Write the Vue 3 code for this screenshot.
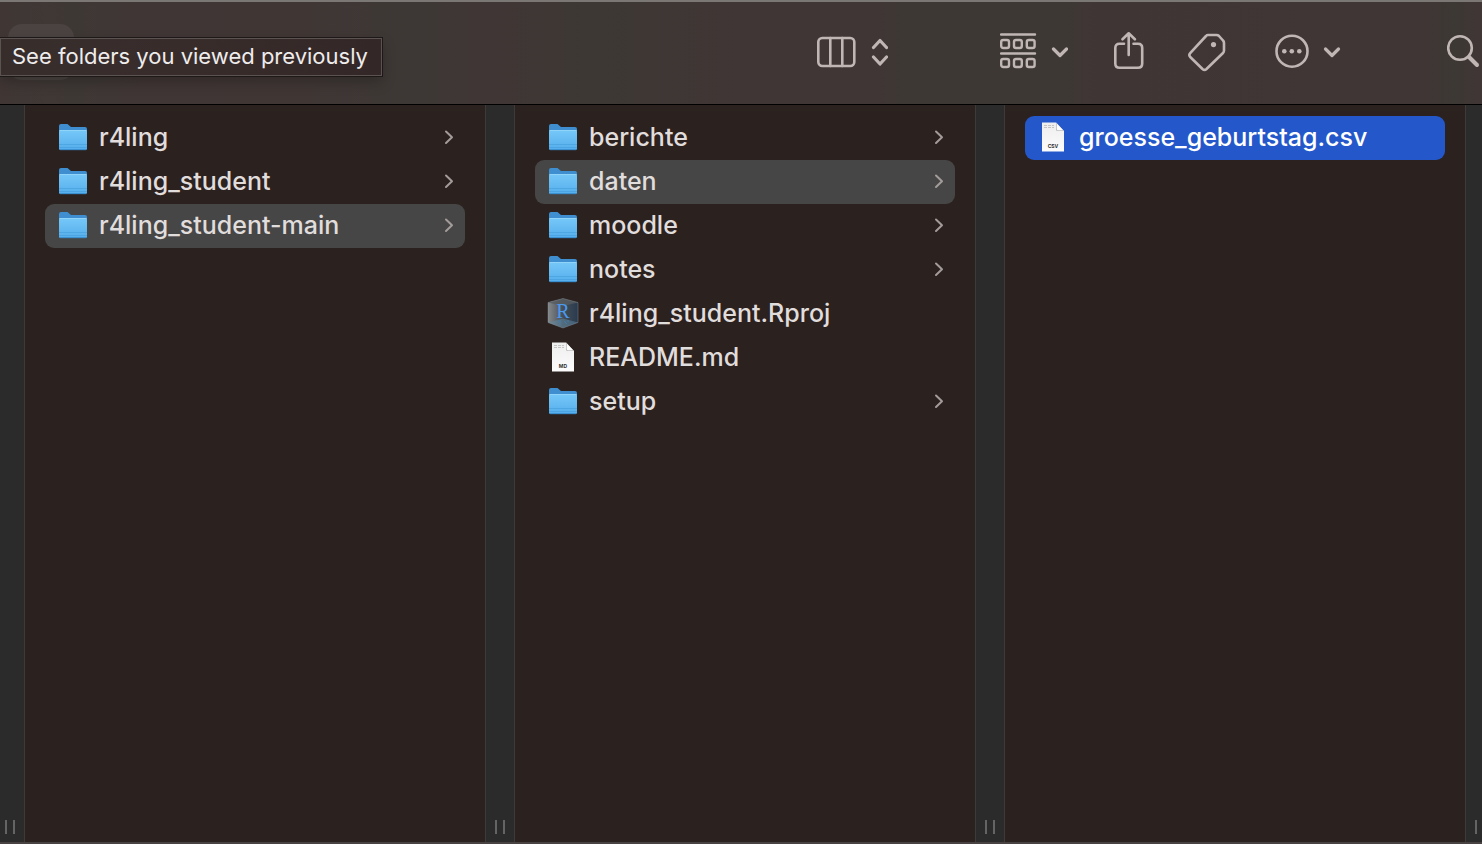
<script setup>
import { ref } from 'vue'

const columns = ref([
  {
    id: 'root',
    items: [
      { name: 'r4ling', kind: 'folder' },
      { name: 'r4ling_student', kind: 'folder' },
      { name: 'r4ling_student-main', kind: 'folder', state: 'open' },
    ],
  },
  {
    id: 'project',
    items: [
      { name: 'berichte', kind: 'folder' },
      { name: 'daten', kind: 'folder', state: 'open' },
      { name: 'moodle', kind: 'folder' },
      { name: 'notes', kind: 'folder' },
      { name: 'r4ling_student.Rproj', kind: 'rproj' },
      { name: 'README.md', kind: 'doc', label: 'MD' },
      { name: 'setup', kind: 'folder' },
    ],
  },
  {
    id: 'data',
    items: [{ name: 'groesse_geburtstag.csv', kind: 'doc', label: 'CSV', state: 'selected' }],
  },
])
</script>

<template>
  <div class="finder">
    <svg class="defs" aria-hidden="true">
      <defs>
        <linearGradient id="folderFront" x1="0" y1="0" x2="0" y2="1">
          <stop offset="0" stop-color="#76c8f8" />
          <stop offset="1" stop-color="#55aeec" />
        </linearGradient>
        <linearGradient id="paper" x1="0" y1="0" x2="0" y2="1">
          <stop offset="0" stop-color="#eeeeee" />
          <stop offset="1" stop-color="#fcfcfc" />
        </linearGradient>
        <linearGradient id="cube" x1="0" y1="0" x2="1" y2="0">
          <stop offset="0" stop-color="#85898c" />
          <stop offset="0.5" stop-color="#454c54" />
          <stop offset="1" stop-color="#293b50" />
        </linearGradient>
      </defs>
    </svg>

    <header class="toolbar">
      <nav class="history">
        <button class="nav hovered" type="button" aria-label="Back">
          <svg width="14" height="32" viewBox="0 0 14 32"><path d="M11 2 L3 16 L11 27" /></svg>
        </button>
        <button class="nav" type="button" aria-label="Forward" disabled>
          <svg width="14" height="32" viewBox="0 0 14 32"><path d="M3 5 L11 16 L3 27" /></svg>
        </button>
        <div class="tooltip" role="tooltip">See folders you viewed previously</div>
      </nav>

      <div class="actions">
        <button class="tool view" type="button" aria-label="Column view">
          <svg width="72" height="40" viewBox="0 0 72 40">
            <rect x="2.300" y="6" width="36" height="28" rx="4" />
            <path d="M14.300 6V34M26.300 6V34" />
            <path class="bold" d="M57.500 15.500 L64 8.500 L70.500 15.500 M57.500 25 L64 32 L70.500 25" />
          </svg>
        </button>
        <button class="tool group" type="button" aria-label="Group items">
          <svg width="68" height="40" viewBox="0 0 68 40">
            <path class="bar" d="M1 2.500H35M1 21.500H35" />
            <g class="cells">
              <rect x="1.200" y="8" width="7.800" height="8" rx="2" />
              <rect x="14" y="8" width="7.800" height="8" rx="2" />
              <rect x="26.800" y="8" width="7.800" height="8" rx="2" />
              <rect x="1.200" y="27" width="7.800" height="8" rx="2" />
              <rect x="14" y="27" width="7.800" height="8" rx="2" />
              <rect x="26.800" y="27" width="7.800" height="8" rx="2" />
            </g>
            <path class="bold" d="M53.500 17 L60 23.500 L66.500 17" />
          </svg>
        </button>
        <button class="tool share" type="button" aria-label="Share">
          <svg width="30" height="40" viewBox="0 0 30 40">
            <path d="M10 11.800H5.500Q1.300 11.800 1.300 16V31.500Q1.300 35.700 5.500 35.700H24Q28.200 35.700 28.200 31.500V16Q28.200 11.800 24 11.800H19.500M14.700 23V1.500M8.500 7.300L14.700 1.300L20.900 7.300" />
          </svg>
        </button>
        <button class="tool tag" type="button" aria-label="Edit tags">
          <svg width="38" height="40" viewBox="0 0 38 40">
            <path d="M20 3H28.500Q30 3 31 4L35 8.500Q36 9.500 36 11V18.500Q36 20 35 21L18.500 37Q16.500 38.800 14.500 37L2.200 25Q.5 23 2.200 21.200L18 4Q18.800 3 20 3Z" />
            <circle class="dot" cx="25.500" cy="12.600" r="2.600" />
          </svg>
        </button>
        <button class="tool more" type="button" aria-label="More actions">
          <svg width="66" height="40" viewBox="0 0 66 40">
            <circle cx="17" cy="19.200" r="15.500" />
            <circle class="dot" cx="9.300" cy="19.200" r="2.300" />
            <circle class="dot" cx="16.800" cy="19.200" r="2.300" />
            <circle class="dot" cx="24.300" cy="19.200" r="2.300" />
            <path class="bold" d="M50.500 17 L57 23.500 L63.500 17" />
          </svg>
        </button>
        <button class="tool search" type="button" aria-label="Search">
          <svg width="34" height="40" viewBox="0 0 34 40">
            <circle cx="13" cy="16" r="11.800" />
            <path class="handle" d="M22 25L30 33" />
          </svg>
        </button>
      </div>
    </header>

    <main class="browser">
      <div class="gutter first"><i></i><i></i></div>
      <template v-for="(column, index) in columns" :key="column.id">
        <ul class="column">
          <li v-for="item in column.items" :key="item.name">
            <button class="row" :class="item.state" type="button">
              <svg v-if="item.kind === 'folder'" class="icon" width="32" height="32" viewBox="0 0 32 32">
                <path fill="#3f8fd0" d="M2 5Q2 3 4 3H10.500L14 6H28Q30 6 30 8V27H2Z" />
                <rect x="2" y="9" width="28" height="20" rx="1.500" fill="url(#folderFront)" />
                <path d="M2.500 9.500H29.500" stroke="#91d4f9" />
                <path d="M2 23.500H30M2 26.500H30" stroke="#459edb" opacity=".6" />
                <path d="M3 28.700H29" stroke="#368bc9" />
              </svg>
              <svg v-else-if="item.kind === 'rproj'" class="icon" width="32" height="32" viewBox="0 0 32 32">
                <path fill="url(#cube)" d="M16 1.500L31 5.500V25.500L16 31L1 25.500V5.500Z" />
                <path fill="#565b5f" opacity=".8" d="M1 5.500L16 1.500L31 5.500L16 9Z" />
                <path fill="#5f89a3" opacity=".5" d="M1 25.500L16 21.500L31 25.500L16 31Z" />
                <path d="M1 5.500L16 1.500L31 5.500V25.500L16 31L1 25.500Z" fill="none" stroke="#8d979f" opacity=".4" />
                <path d="M11 24H14M13 24V28M17 24L20 27M20 24H22" stroke="#3f83b8" opacity=".7" />
                <text x="16" y="21" class="r-letter">R</text>
              </svg>
              <svg v-else class="icon" width="32" height="32" viewBox="0 0 32 32">
                <path fill="url(#paper)" d="M5 1.500H19L27 10V30.500H5Z" />
                <path fill="#bdbdbd" d="M19 1.500V8.500Q19 10 20.500 10H27Z" />
                <path fill="#ffffff" d="M19.800 2.500V8Q19.800 9.200 21 9.200H26Z" />
                <path d="M7 4.500H17M7 6.500H17" stroke="#c4c4c4" stroke-dasharray="3 1" />
                <text x="16" y="27" class="doc-label">{{ item.label }}</text>
              </svg>
              <span class="name">{{ item.name }}</span>
              <svg v-if="item.kind === 'folder'" class="arrow" width="10" height="16" viewBox="0 0 10 16">
                <path d="M2 2.500L8 8.200L2 14" />
              </svg>
            </button>
          </li>
        </ul>
        <div class="gutter" :class="{ last: index === columns.length - 1 }"><i></i><i></i></div>
      </template>
    </main>
  </div>
</template>

<style>
body {
  margin: 0;
  background: #2b211f;
}
</style>

<style scoped>
.finder {
  box-sizing: border-box;
  display: flex;
  flex-direction: column;
  height: 100vh;
  overflow: hidden;
  border-top: 2px solid #7b7775;
  background: #2b211f;
  color: #e0dddc;
  font-family: Inter, "Liberation Sans", sans-serif;
}
.defs {
  position: absolute;
  width: 0;
  height: 0;
}
button {
  margin: 0;
  padding: 0;
  border: 0;
  background: none;
  color: inherit;
  font: inherit;
}
.toolbar {
  display: flex;
  flex: none;
  justify-content: space-between;
  height: 102px;
  border-bottom: 1px solid #000;
  background: linear-gradient(90deg, #403735 0%, #3e3835 5%, #403635 10%, #403735 20%, #3d3835 28%, #403635 33%, #3d3834 40%, #403635 50%, #403635 59%, #3d3834 61%, #3d3834 72%, #403535 74%, #403635 90%, #403635 96%, #3c3834 98%, #403635 100%);
}
.history {
  position: relative;
  display: flex;
  align-items: flex-start;
  padding: 22px 0 0 8px;
}
.nav {
  display: grid;
  place-items: center;
  width: 66px;
  height: 56px;
  border-radius: 14px;
}
.nav.hovered {
  background: #4a4341;
}
.nav path {
  fill: none;
  stroke: #8b8482;
  stroke-width: 3;
}
.tooltip {
  position: absolute;
  top: 36px;
  left: 0;
  box-sizing: border-box;
  height: 38px;
  padding: 0 13px 0 11px;
  border: 1px solid #5b5351;
  outline: 1px solid #1e1918;
  background: linear-gradient(90deg, #372e2c, #382c2b 50%, #332827);
  box-shadow: 0 6px 14px rgba(0, 0, 0, 0.25);
  color: #efecec;
  font-size: 22px;
  line-height: 34px;
  white-space: nowrap;
}
.actions {
  display: flex;
  align-items: flex-start;
  padding: 30px 1px 0 0;
}
.tool svg {
  display: block;
  fill: none;
  stroke: #c0b6b4;
  stroke-width: 2.600;
  stroke-linecap: round;
  stroke-linejoin: round;
}
.tool .bold {
  stroke-width: 3.200;
}
.tool .bar {
  stroke-width: 2.400;
}
.tool .cells {
  stroke-width: 2.400;
}
.tool .handle {
  stroke-width: 4;
}
.tool .dot {
  fill: #c0b6b4;
  stroke: none;
}
.group {
  margin-left: 112px;
}
.share {
  margin-left: 46px;
}
.tag {
  margin-left: 44px;
}
.more {
  margin-left: 49px;
}
.search {
  margin-left: 106px;
}
.browser {
  display: flex;
  flex: 1;
  min-height: 0;
  border-bottom: 2px solid #484342;
}
.column {
  flex: 1 1 0;
  min-width: 0;
  margin: 0;
  padding: 11px 20px;
  list-style: none;
}
.row {
  box-sizing: border-box;
  display: flex;
  align-items: center;
  width: 100%;
  height: 44px;
  padding: 0 11px 2px 12px;
  border-radius: 9px;
  text-align: left;
}
.row.open {
  background: #464646;
}
.row.selected {
  background: #2458ca;
  color: #fff;
}
.icon {
  flex: none;
  margin-right: 10px;
}
.name {
  flex: 1;
  font-size: 25px;
  font-weight: 500;
  line-height: 32px;
  white-space: nowrap;
}
.arrow {
  flex: none;
  fill: none;
  stroke: #a39c9a;
  stroke-width: 2;
  stroke-linecap: round;
  stroke-linejoin: round;
}
.r-letter {
  fill: #4a9af0;
  font-family: "Liberation Serif", serif;
  font-size: 20px;
  text-anchor: middle;
}
.doc-label {
  fill: #333;
  font-size: 5px;
  font-weight: 700;
  text-anchor: middle;
}
.gutter {
  box-sizing: border-box;
  display: flex;
  flex: none;
  gap: 6px;
  align-items: flex-end;
  justify-content: center;
  width: 30px;
  padding-bottom: 8px;
  border: solid #3d3b3a;
  border-width: 0 1px;
  background: #2b2b2b;
}
.gutter i {
  width: 2px;
  height: 14px;
  background: #646464;
}
.gutter.first {
  justify-content: flex-end;
  width: 25px;
  padding-right: 9px;
  border-left: 0;
}
.gutter.last {
  justify-content: flex-start;
  width: 17px;
  padding-left: 9px;
  border-right: 0;
  overflow: hidden;
}
.gutter.last i {
  flex: none;
}
</style>
